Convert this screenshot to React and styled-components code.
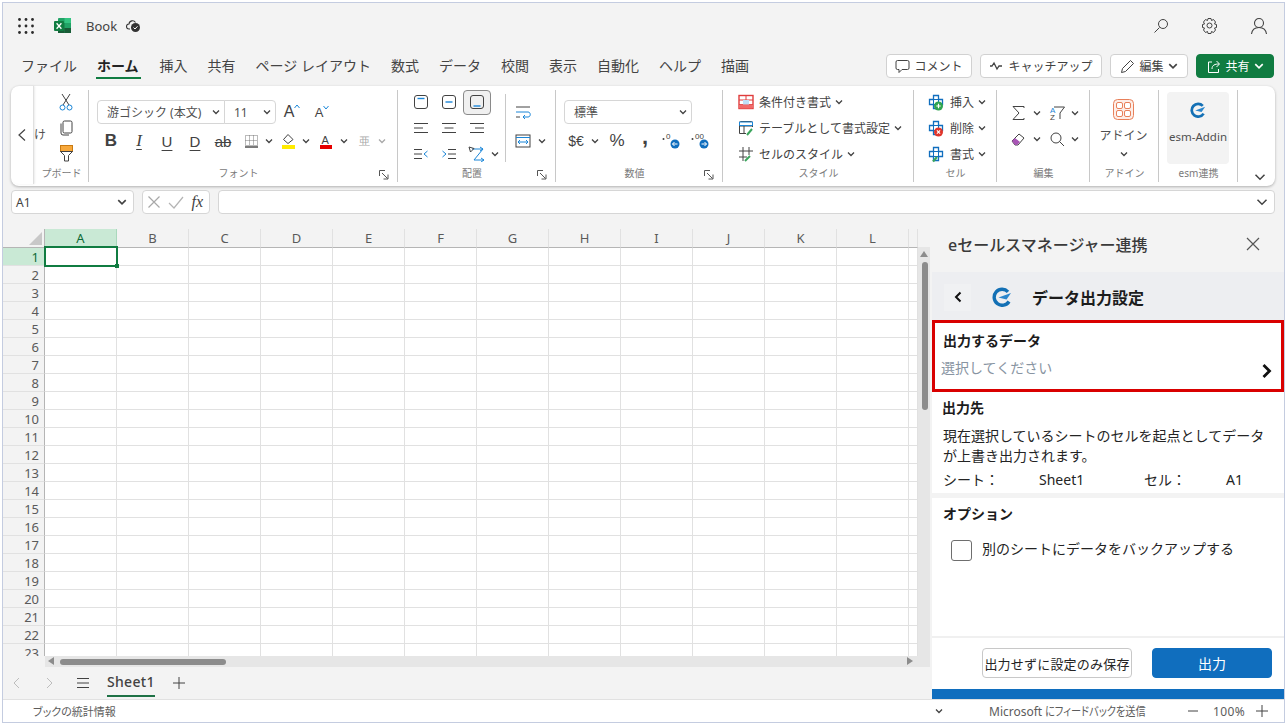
import React from "react";
import styled, { createGlobalStyle } from "styled-components";

const FONT = `"Noto Sans", "Noto Sans CJK JP", sans-serif`;
const GREEN = "#107c41";
const BLUE = "#106ebe";

const GlobalStyle = createGlobalStyle`
  html, body {
    margin: 0;
    background: #fff;
    font-family: ${FONT};
    overflow: hidden;
  }
  * { box-sizing: border-box; }
`;

const Win = styled.div`
  position: relative;
  margin: 2px 0 0 2px;
  width: 1283px;
  height: 721px;
  border: 1px solid #c4cce0;
  background: #f3f3f3;
  display: flex;
  flex-direction: column;
  overflow: hidden;
`;

/* title bar */
const TitleBar = styled.div`
  height: 45px;
  display: flex;
  align-items: center;
  padding: 0 16px 0 15px;
  flex-shrink: 0;
`;
const BookName = styled.span`
  margin-left: 15px;
  font-size: 13px;
  color: #424242;
  width: 40px;
`;
const TitleTools = styled.div`
  margin-left: auto;
  display: flex;
  align-items: center;
  gap: 32px;
`;

/* tab row */
const TabRow = styled.div`
  height: 38px;
  display: flex;
  padding: 6px 10px 0 18px;
  flex-shrink: 0;
`;
const Tabs = styled.div`
  display: flex;
  gap: 20px;
  flex: 1;
`;
const Tab = styled.div`
  height: 25px;
  font-size: 14px;
  line-height: 24px;
  white-space: nowrap;
  color: ${(p) => (p.$active ? "#242424" : "#444")};
  font-weight: ${(p) => (p.$active ? 700 : 400)};
  margin-right: ${(p) => (p.$active ? 1 : 0)}px;
  position: relative;
  ${(p) =>
    p.$active &&
    `&:after { content: ""; position: absolute; left: -1px; right: -2px; bottom: 0; height: 2px; background: ${GREEN}; }`}
`;
const ActionRow = styled.div`
  display: flex;
  gap: 8px;
  height: 24px;
`;
const ActionBtn = styled.div`
  width: ${(p) => p.$w}px;
  height: 24px;
  display: flex;
  align-items: center;
  justify-content: center;
  gap: 4px;
  border: 1px solid ${(p) => (p.$primary ? GREEN : "#d1d1d1")};
  border-radius: 4px;
  background: ${(p) => (p.$primary ? GREEN : "#fff")};
  color: ${(p) => (p.$primary ? "#fff" : "#424242")};
  font-size: 12px;
  white-space: nowrap;
`;

/* ribbon */
const Ribbon = styled.div`
  position: relative;
  height: 100px;
  margin: 0 9px 0 8px;
  background: #fff;
  border-radius: 8px;
  box-shadow: 0 1px 3px rgba(0, 0, 0, 0.28);
  display: flex;
  flex-shrink: 0;
`;
const BackTab = styled.div`
  width: 23px;
  height: 98px;
  display: flex;
  align-items: center;
  justify-content: center;
  border-right: 1px solid #e0e0e0;
  border-radius: 8px 0 0 8px;
  box-shadow: 1px 0 2px rgba(0, 0, 0, 0.08);
`;
const Group = styled.div`
  position: relative;
  width: ${(p) => p.$w}px;
  height: 100px;
  flex-shrink: 0;
  &:after {
    content: "";
    position: absolute;
    right: 0;
    top: 4px;
    bottom: 4px;
    width: 1px;
    background: #c8c8c8;
  }
`;
const GroupLabel = styled.div`
  position: absolute;
  left: 0;
  right: ${(p) => (p.$launch ? 10 : 0)}px;
  top: 80px;
  font-size: 10px;
  line-height: 14px;
  text-align: center;
  color: #7a7a7a;
  white-space: nowrap;
`;
const Launcher = styled.svg`
  position: absolute;
  right: 9px;
  bottom: 6px;
`;
const ClipText = styled.div`
  position: absolute;
  left: 0;
  top: 39px;
  font-size: 12px;
  color: #505050;
  white-space: nowrap;
`;
const ClipIcons = styled.div`
  position: absolute;
  left: 25px;
  top: 7px;
  width: 14px;
  display: flex;
  flex-direction: column;
  align-items: center;
  gap: 9px;
`;
const FontStack = styled.div`
  padding: 14px 0 0 8px;
  display: flex;
  flex-direction: column;
  gap: 5px;
`;
const Line = styled.div`
  display: flex;
  align-items: center;
  gap: ${(p) => p.$gap || 0}px;
  height: ${(p) => p.$h || 24}px;
`;
const Drop = styled.div`
  display: flex;
  align-items: center;
  justify-content: space-between;
  width: ${(p) => p.$w}px;
  height: 24px;
  border: 1px solid #d6d6d6;
  background: #fff;
  padding: 0 4px 0 ${(p) => p.$pad || 9}px;
  font-size: 12px;
  color: #505050;
  white-space: nowrap;
  border-radius: ${(p) => p.$r || "4px"};
  ${(p) => p.$noLeft && "margin-left: -1px;"}
`;
const ToolGlyph = styled.span`
  width: ${(p) => p.$w || 28}px;
  margin-left: ${(p) => p.$ml || 0}px;
  padding-bottom: ${(p) => p.$pb || 0}px;
  height: 24px;
  flex-shrink: 0;
  display: inline-flex;
  align-items: center;
  justify-content: center;
  font-size: ${(p) => p.$size || 15}px;
  font-family: ${(p) => (p.$serif ? `"Liberation Serif", serif` : `"Liberation Sans", sans-serif`)};
  color: ${(p) => p.$color || "#424242"};
  font-weight: ${(p) => (p.$bold ? 700 : 400)};
  font-style: ${(p) => (p.$italic ? "italic" : "normal")};
  text-decoration: ${(p) => p.$deco || "none"};
  text-underline-offset: 3px;
`;
const AlignGrid = styled.div`
  position: absolute;
  left: 9px;
  top: 3px;
  display: grid;
  grid-template-columns: repeat(3, 28px);
  grid-auto-rows: 26px;
  justify-items: center;
  align-items: center;
`;
const AlignBtn = styled.div`
  width: ${(p) => (p.$wide ? 44 : 28)}px;
  height: 25px;
  display: flex;
  align-items: center;
  justify-content: ${(p) => (p.$wide ? "flex-start" : "center")};
  border-radius: 4px;
  ${(p) => p.$wide && "justify-self: start; gap: 5px; padding-left: 5px;"}
  ${(p) => p.$on && "background: #f0f0f0; border: 1px solid #8a8a8a;"}
`;
const InnerSep = styled.div`
  position: absolute;
  left: 107px;
  top: 8px;
  height: 68px;
  width: 1px;
  background: #c8c8c8;
`;
const WrapCol = styled.div`
  position: absolute;
  left: 117px;
  top: 18px;
  display: flex;
  flex-direction: column;
  gap: 13px;
`;
const ListCol = styled.div`
  position: absolute;
  left: ${(p) => p.$left}px;
  top: 3px;
  display: flex;
  flex-direction: column;
`;
const ListRow = styled.div`
  height: 26px;
  display: flex;
  align-items: center;
  gap: 4px;
  font-size: 12px;
  color: #424242;
  white-space: nowrap;
`;
const RowIcon = styled.span`
  display: inline-flex;
  margin-right: 1px;
`;
const EditGrid = styled.div`
  position: absolute;
  left: 14px;
  top: 14px;
  display: grid;
  grid-template-columns: 38px 38px;
  grid-auto-rows: 26px;
`;
const EditItem = styled.div`
  display: flex;
  align-items: center;
  gap: 6px;
`;
const TallBtn = styled.div`
  position: absolute;
  left: ${(p) => p.$left}px;
  right: ${(p) => p.$right}px;
  top: ${(p) => p.$top}px;
  height: ${(p) => p.$h}px;
  display: flex;
  flex-direction: column;
  align-items: center;
  background: ${(p) => p.$bg || "transparent"};
  border-radius: 4px;
  font-size: 12px;
  color: #505050;
  white-space: nowrap;
`;
const AddinText = styled.span`
  margin: 7px 0 6px;
  line-height: 17px;
`;
const EsmMark = styled.span`
  margin-top: 10px;
  height: 20px;
`;
const EsmText = styled.span`
  margin-top: 7px;
  font-size: 11.5px;
`;
const Collapse = styled.div`
  position: absolute;
  right: 9px;
  top: 80px;
`;

/* formula bar */
const FormulaBar = styled.div`
  height: 24px;
  margin: 4px 9px 4px 8px;
  display: flex;
  gap: 8px;
  flex-shrink: 0;
`;
const FormulaBox = styled.div`
  width: ${(p) => (p.$w ? `${p.$w}px` : "auto")};
  flex: ${(p) => (p.$w ? "none" : 1)};
  height: 24px;
  background: #fff;
  border: 1px solid #d6d6d6;
  border-radius: 4px;
  display: flex;
  align-items: center;
  justify-content: space-between;
  padding: 0 6px 0 4px;
  font-size: 12px;
  color: #424242;
`;
const FxText = styled.span`
  font-family: "Liberation Serif", serif;
  font-style: italic;
  font-size: 16px;
  color: #424242;
`;

/* workspace */
const Workspace = styled.div`
  flex: 1;
  min-height: 0;
  display: flex;
`;
const SheetArea = styled.div`
  position: relative;
  width: 929px;
  flex-shrink: 0;
  background: #f3f3f3;
`;
const GridWrap = styled.div`
  position: absolute;
  left: 0;
  top: 11px;
  width: 915px;
  height: 427px;
  overflow: hidden;
  display: grid;
  grid-template-columns: 42px repeat(12, 72px) 9px;
  grid-template-rows: 19px;
  grid-auto-rows: 18px;
  background: #fff;
`;
const Corner = styled.div`
  background: #f3f3f3;
  border-right: 1px solid #b5b5b5;
  border-bottom: 1px solid #b5b5b5;
  position: relative;
  &:after {
    content: "";
    position: absolute;
    right: 2px;
    bottom: 2px;
    border-style: solid;
    border-width: 0 0 13px 13px;
    border-color: transparent transparent #c8c8c8 transparent;
  }
`;
const ColHead = styled.div`
  background: ${(p) => (p.$on ? "#c9e9d5" : "#f3f3f3")};
  border-right: 1px solid ${(p) => (p.$on ? "#a9d8bc" : "#e1e1e1")};
  border-bottom: 1px solid ${(p) => (p.$on ? GREEN : "#b5b5b5")};
  text-align: center;
  font-size: 13px;
  line-height: 18px;
  color: ${(p) => (p.$on ? "#0e6b38" : "#5a5a5a")};
`;
const RowHead = styled.div`
  background: ${(p) => (p.$on ? "#c9e9d5" : "#f3f3f3")};
  border-right: 1px solid ${(p) => (p.$on ? GREEN : "#b5b5b5")};
  border-bottom: 1px solid #e1e1e1;
  text-align: right;
  padding-right: 5px;
  font-size: 13px;
  line-height: 19px;
  color: ${(p) => (p.$on ? "#0e6b38" : "#5a5a5a")};
`;
const Cell = styled.div`
  border-right: 1px solid #e1e1e1;
  border-bottom: 1px solid #e1e1e1;
`;
const Selection = styled.div`
  position: absolute;
  left: 41px;
  top: 17px;
  width: 74px;
  height: 21px;
  border: 2px solid ${GREEN};
  &:after {
    content: "";
    position: absolute;
    right: -3px;
    bottom: -3px;
    width: 4px;
    height: 4px;
    background: ${GREEN};
  }
`;
const VScroll = styled.div`
  position: absolute;
  left: 915px;
  top: 29px;
  width: 12px;
  height: 420px;
  background: #e6e6e6;
`;
const HScroll = styled.div`
  position: absolute;
  left: 42px;
  top: 438px;
  width: 885px;
  height: 11px;
  background: #e6e6e6;
`;
const VThumb = styled.div`
  position: absolute;
  left: 4px;
  top: 15px;
  width: 6px;
  height: 148px;
  border-radius: 3px;
  background: #8c8c8c;
`;
const HThumb = styled.div`
  position: absolute;
  left: 15px;
  top: 3px;
  width: 166px;
  height: 6px;
  border-radius: 3px;
  background: #8c8c8c;
`;
const Arrow = styled.div`
  position: absolute;
  width: 0;
  height: 0;
  border-style: solid;
  ${(p) => p.$css}
`;
const SheetTabs = styled.div`
  position: absolute;
  left: 0;
  top: 449px;
  width: 929px;
  height: 32px;
  display: flex;
  align-items: center;
  padding-left: 9px;
`;
const SheetNav = styled.span`
  width: ${(p) => p.$w}px;
  display: inline-flex;
  justify-content: flex-start;
`;
const SheetTab = styled.div`
  position: relative;
  width: 48px;
  height: 32px;
  margin-right: 18px;
  font-size: 14px;
  font-weight: 500;
  letter-spacing: 0.3px;
  line-height: 29px;
  color: #424242;
  white-space: nowrap;
  &:after {
    content: "";
    position: absolute;
    left: 0;
    right: 0;
    bottom: 2px;
    height: 2.5px;
    background: #1e7145;
  }
`;

/* task pane */
const Pane = styled.div`
  flex: 1;
  position: relative;
  background: #fff;
  display: flex;
  flex-direction: column;
`;
const PaneHead = styled.div`
  height: 54px;
  background: #f3f3f3;
  display: flex;
  align-items: center;
  justify-content: space-between;
  padding: 0 24px 2px 16px;
  font-size: 16px;
  font-weight: 500;
  color: #3a3a3a;
  white-space: nowrap;
`;
const SubHead = styled.div`
  height: 48px;
  background: #edeef1;
  display: flex;
  align-items: center;
  padding: 2px 0 0 12px;
  font-size: 16px;
  font-weight: 700;
  color: #1c1c1c;
`;
const BackBtn = styled.div`
  width: 27px;
  height: 27px;
  background: #f0f1f3;
  display: flex;
  align-items: center;
  justify-content: center;
  margin-right: 21px;
`;
const SubTitle = styled.span`
  margin-left: 20px;
`;
const Picker = styled.div`
  position: relative;
  height: 72px;
  border: 3px solid #d90000;
  padding: 8px 8px 0 8px;
`;
const FieldTitle = styled.div`
  font-size: 14px;
  font-weight: 700;
  line-height: 20px;
  color: #1c1c1c;
`;
const Placeholder = styled.div`
  margin: 7px 0 0 -2px;
  font-size: 14px;
  line-height: 20px;
  color: #8894a2;
`;
const PickerArrow = styled.svg`
  position: absolute;
  right: 8px;
  top: 40px;
`;
const Section = styled.div`
  padding: ${(p) => p.$pad};
  height: ${(p) => p.$h}px;
  ${(p) => p.$rule && "border-bottom: 5px solid #f3f3f3;"}
`;
const Body = styled.div`
  margin: 8px 0 0 1px;
  font-size: 14px;
  line-height: 20px;
  color: #242424;
`;
const InfoRow = styled.div`
  display: grid;
  grid-template-columns: 96px 105px 82px auto;
  margin: 4px 0 0 1px;
  font-size: 14px;
  line-height: 20px;
  color: #242424;
`;
const CheckRow = styled.div`
  display: flex;
  align-items: center;
  gap: 10px;
  margin: 16px 0 0 8px;
  font-size: 14px;
  color: #242424;
`;
const CheckLabel = styled.span`
  position: relative;
  top: -3px;
`;
const CheckBox = styled.div`
  width: 21px;
  height: 21px;
  border: 1px solid #6e6e6e;
  border-radius: 3px;
  background: #fff;
`;
const Footer = styled.div`
  position: absolute;
  left: 0;
  right: 0;
  bottom: 0;
  height: 63px;
  border-top: 2px solid #f0f0f0;
  border-bottom: 10px solid ${BLUE};
  padding: 10px 12px 0 50px;
  display: flex;
  gap: 20px;
`;
const FootBtn = styled.div`
  width: ${(p) => p.$w}px;
  height: 30px;
  display: flex;
  align-items: center;
  justify-content: center;
  border-radius: 4px;
  font-size: 14px;
  white-space: nowrap;
  background: ${(p) => (p.$primary ? BLUE : "#fff")};
  color: ${(p) => (p.$primary ? "#fff" : "#242424")};
  border: 1px solid ${(p) => (p.$primary ? BLUE : "#c8c8c8")};
  ${(p) => !p.$primary && "font-size: 13px; letter-spacing: 0.2px;"}
`;

/* status bar */
const StatusBar = styled.div`
  position: relative;
  height: 23px;
  background: #fff;
  border-top: 1px solid #e1e1e1;
  display: flex;
  align-items: center;
  font-size: 11px;
  font-feature-settings: "palt";
  color: #5c5c5c;
  flex-shrink: 0;
  padding-left: 30px;
  white-space: nowrap;
`;
const StatusRight = styled.div`
  position: absolute;
  left: 932px;
  right: 0;
  display: flex;
  align-items: center;
  font-size: 12px;
`;
const FeedbackText = styled.span`
  width: 198px;
  margin-left: 46px;
`;
const NarrowKana = styled.span`
  display: inline-block;
  transform: scaleX(0.85);
  transform-origin: left center;
`;
const ZoomText = styled.span`
  margin: 0 11px 0 14px;
  font-size: 12px;
  letter-spacing: 0.4px;
`;

/* drawings */
const Chev = ({ size = 8, color = "#424242", w = 1.3 }) => (
  <svg width={size} height={size} viewBox="0 0 8 8" style={{ flexShrink: 0 }}>
    <path d="M1 2.5 4 5.5 7 2.5" fill="none" stroke={color} strokeWidth={w} />
  </svg>
);
const Stroke = ({ w = 16, h = 16, children, sw = 1, color = "#424242" }) => (
  <svg width={w} height={h} viewBox={`0 0 ${w} ${h}`} fill="none" stroke={color} strokeWidth={sw} style={{ flexShrink: 0 }}>
    {children}
  </svg>
);
const Waffle = () => (
  <svg width="16" height="16" viewBox="0 0 16 16" fill="#2b2b2b">
    {[1.5, 8, 14.5].map((y) =>
      [1.5, 8, 14.5].map((x) => <circle key={`${x}-${y}`} cx={x} cy={y} r="1.4" />)
    )}
  </svg>
);
const ExcelLogo = () => (
  <svg width="17" height="17" viewBox="0 0 17 17" style={{ marginLeft: 20 }}>
    <rect x="4" y="1" width="13" height="15" rx="1" fill="#21a366" />
    <rect x="10.5" y="1" width="6.5" height="5" fill="#33c481" />
    <rect x="4" y="6" width="6.5" height="5" fill="#107c41" />
    <rect x="10.5" y="11" width="6.5" height="5" fill="#185c37" />
    <rect x="4" y="11" width="6.5" height="5" fill="#185c37" />
    <rect x="0" y="4" width="10" height="10" rx="1" fill="#107c41" />
    <path d="M2.6 6.3 7.4 11.7M7.4 6.3 2.6 11.7" stroke="#fff" strokeWidth="1.3" />
  </svg>
);
const CloudCheck = () => (
  <svg width="16" height="14" viewBox="0 0 16 14">
    <path d="M4 10H3a2.500 2.500 0 0 1 0-5 3.500 3.500 0 0 1 6.500-1.500" fill="none" stroke="#333" strokeWidth="1.1" />
    <circle cx="9.500" cy="8.500" r="4.500" fill="#333" />
    <path d="M7.500 8.500 9 10 11.500 7.300" fill="none" stroke="#fff" strokeWidth="1" />
  </svg>
);
const EsmLogo = ({ size = 20 }) => (
  <svg width={size} height={size} viewBox="0 0 20 20">
    <path d="M17 14.500A8 8 0 1 1 16 4.800" fill="none" stroke="#1370b5" strokeWidth="3.400" />
    <path d="M6.500 10.500 19 6 14.500 12.500Z" fill="#2a86cc" />
  </svg>
);
const CellIcon = ({ badge, badgeColor }) => (
  <svg width="18" height="17" viewBox="0 0 18 17">
    <path d="M6.500 1.500h5v4h4v5h-4v4h-5v-4h-4v-5h4z" fill="#fff" stroke="#106ebe" strokeWidth="1.300" />
    <path d="M6.500 5.500h5v5h-5z" fill="none" stroke="#106ebe" strokeWidth="1" />
    {badge === "pen" ? (
      <path d="M6 15.500 10 11" stroke={badgeColor} strokeWidth="2.200" />
    ) : (
      <>
        <circle cx="11.500" cy="12" r="4.500" fill={badgeColor} />
        <path
          d={badge === "plus" ? "M9.300 12h4.400M11.500 9.800v4.400" : "M9.900 10.400l3.200 3.200M13.100 10.400l-3.200 3.200"}
          stroke="#fff"
          strokeWidth="1.200"
        />
      </>
    )}
  </svg>
);
const VAlignIcon = ({ y }) => (
  <svg width="16" height="16" viewBox="0 0 16 16">
    <rect x="1.500" y="1.500" width="13" height="13" rx="2.500" fill="none" stroke="#424242" />
    <path d={`M4.500 ${y}h7`} stroke="#1a86d8" strokeWidth="1.400" />
  </svg>
);
const LinesIcon = ({ rows }) => (
  <Stroke>
    {rows.map(([a, b], i) => (
      <path key={i} d={`M${a} ${3.5 + i * 4.5}H${b}`} />
    ))}
  </Stroke>
);
const IndentIcon = ({ flip }) => (
  <Stroke>
    <path d={flip ? "M7 3.500h8M7 8h8M7 12.500h8" : "M1 3.500h8M1 8h8M1 12.500h8"} />
    <path d={flip ? "M1.500 5 5 8 1.500 11" : "M14.500 5 11 8 14.500 11"} stroke="#1a86d8" />
  </Stroke>
);
const DecimalIcon = ({ right, text }) => (
  <svg width="20" height="18" viewBox="0 0 20 18">
    <circle cx="1.500" cy="7" r="1" fill="#424242" />
    <text x="4" y="7" fontSize="8" fill="#424242" fontFamily="Liberation Sans">{text}</text>
    <circle cx="13" cy="12" r="4.500" fill="#106ebe" />
    <path d={right ? "M10.500 12h5M13.500 10l2 2-2 2" : "M15.500 12h-5M12.500 10l-2 2 2 2"} fill="none" stroke="#fff" />
  </svg>
);
const LaunchIcon = () => (
  <Launcher width="10" height="10" viewBox="0 0 10 10" fill="none" stroke="#555">
    <path d="M.5 6V.5H6M3 3l5.500 5.500M9 4.500V9H4.500" />
  </Launcher>
);

const COLS = "ABCDEFGHIJKL".split("");
const ROWS = Array.from({ length: 23 }, (_, i) => i + 1);

const TABS = ["ファイル", "ホーム", "挿入", "共有", "ページ レイアウト", "数式", "データ", "校閲", "表示", "自動化", "ヘルプ", "描画"];

const SheetGrid = () => (
  <GridWrap>
    <Corner />
    {COLS.map((c, i) => (
      <ColHead key={c} $on={i === 0}>{c}</ColHead>
    ))}
    <ColHead />
    {ROWS.map((r) => (
      <React.Fragment key={r}>
        <RowHead $on={r === 1}>{r}</RowHead>
        {COLS.map((c) => (
          <Cell key={c} />
        ))}
        <Cell />
      </React.Fragment>
    ))}
    <Selection />
  </GridWrap>
);

const FontGroup = () => (
  <Group $w={309}>
    <FontStack>
      <Line>
        <Drop $w={128} $r="4px 0 0 4px">
          游ゴシック (本文)<Chev />
        </Drop>
        <Drop $w={52} $r="0 4px 4px 0" $noLeft>
          11<Chev />
        </Drop>
        <ToolGlyph $w={32} $size={16}>A<svg width="6" height="6" viewBox="0 0 6 6" style={{ marginBottom: 10 }}><path d="M.5 4 3 1 5.500 4" fill="none" stroke="#1a86d8" /></svg></ToolGlyph>
        <ToolGlyph $w={28} $size={13}>A<svg width="6" height="6" viewBox="0 0 6 6" style={{ marginBottom: 10 }}><path d="M.5 2 3 5 5.500 2" fill="none" stroke="#1a86d8" /></svg></ToolGlyph>
      </Line>
      <Line>
        <ToolGlyph $bold $size={17}>B</ToolGlyph>
        <ToolGlyph $italic $serif $deco="underline" $size={17}>I</ToolGlyph>
        <ToolGlyph $deco="underline">U</ToolGlyph>
        <ToolGlyph $deco="underline">D</ToolGlyph>
        <ToolGlyph $deco="line-through">ab</ToolGlyph>
        <ToolGlyph>
          <Stroke w={15} h={15} color="#777">
            <path d="M1.500 1.500h12v10h-12zM5.500 1.500v10M9.500 1.500v10M1.500 6.500h12" strokeDasharray="1 1" />
            <path d="M1 13h13" stroke="#424242" strokeWidth="1.400" />
          </Stroke>
        </ToolGlyph>
        <ToolGlyph $w={8}><Chev /></ToolGlyph>
        <ToolGlyph $ml={6} $w={18}>
          <svg width="15" height="17" viewBox="0 0 15 17">
            <path d="M7 1.500 12 6.500 7 10.500 2.500 6.500z" fill="none" stroke="#424242" />
            <rect x="1" y="12" width="13" height="4" fill="#ffeb00" />
          </svg>
        </ToolGlyph>
        <ToolGlyph $ml={5} $w={8}><Chev /></ToolGlyph>
        <ToolGlyph $ml={6} $w={20}>
          <svg width="14" height="17" viewBox="0 0 14 17">
            <text x="2.500" y="10.500" fontSize="11" fill="#424242" fontFamily="Liberation Sans">A</text>
            <rect x="1" y="12" width="12" height="4" fill="#e60000" />
          </svg>
        </ToolGlyph>
        <ToolGlyph $ml={4} $w={8}><Chev /></ToolGlyph>
        <ToolGlyph $ml={6} $w={20} $size={11} $color="#a8a8a8">亜</ToolGlyph>
        <ToolGlyph $ml={4} $w={8}><Chev color="#a8a8a8" /></ToolGlyph>
      </Line>
    </FontStack>
    <GroupLabel $launch>フォント</GroupLabel>
    <LaunchIcon />
  </Group>
);

const AlignGroup = () => (
  <Group $w={158}>
    <AlignGrid>
      <AlignBtn><VAlignIcon y={4.500} /></AlignBtn>
      <AlignBtn><VAlignIcon y={8} /></AlignBtn>
      <AlignBtn $on><VAlignIcon y={12} /></AlignBtn>
      <AlignBtn><LinesIcon rows={[[1, 15], [1, 10], [1, 15]]} /></AlignBtn>
      <AlignBtn><LinesIcon rows={[[1, 15], [3.500, 12.500], [1, 15]]} /></AlignBtn>
      <AlignBtn><LinesIcon rows={[[1, 15], [6, 15], [1, 15]]} /></AlignBtn>
      <AlignBtn><IndentIcon /></AlignBtn>
      <AlignBtn><IndentIcon flip /></AlignBtn>
      <AlignBtn $wide>
        <Stroke w={18} h={16} color="#1a86d8">
          <path d="M4 3 15 3M15 3 6 14M6 14h10M12 1l3 2-3 2M13 12l3 2-3 2" />
          <path d="M1 1l5 1.500-3.500 3.500z" stroke="#424242" />
        </Stroke>
        <Chev />
      </AlignBtn>
    </AlignGrid>
    <InnerSep />
    <WrapCol>
      <Stroke h={16}>
        <path d="M1 3h14M1 13h4" />
        <path d="M1 8h12c3 0 3 5 0 5H8M10 11l-2 2 2 2" stroke="#1a86d8" />
      </Stroke>
      <Line $h={16} $gap={7}>
        <svg width="16" height="14" viewBox="0 0 16 14">
          <rect x="1" y="1" width="14" height="12" fill="none" stroke="#424242" />
          <path d="M1 3.500h14" stroke="#1a86d8" />
          <path d="M3 8h10M5 6 3 8l2 2M11 6l2 2-2 2" fill="none" stroke="#1a86d8" />
        </svg>
        <Chev />
      </Line>
    </WrapCol>
    <GroupLabel $launch>配置</GroupLabel>
    <LaunchIcon />
  </Group>
);

const NumberGroup = () => (
  <Group $w={167}>
    <FontStack>
      <Line>
        <Drop $w={128}>標準<Chev /></Drop>
      </Line>
      <Line>
        <ToolGlyph $w={24} $size={14}>$€</ToolGlyph>
        <ToolGlyph $w={14}><Chev /></ToolGlyph>
        <ToolGlyph $w={30} $size={17}>%</ToolGlyph>
        <ToolGlyph $w={26} $size={22} $bold $pb={8}>,</ToolGlyph>
        <ToolGlyph $w={28}><DecimalIcon text="0" /></ToolGlyph>
        <ToolGlyph $w={30}><DecimalIcon right text="00" /></ToolGlyph>
      </Line>
    </FontStack>
    <GroupLabel $launch>数値</GroupLabel>
    <LaunchIcon />
  </Group>
);

const StyleGroup = () => (
  <Group $w={191}>
    <ListCol $left={15}>
      <ListRow>
        <RowIcon>
          <svg width="16" height="16" viewBox="0 0 16 16">
            <rect x="1" y="1.500" width="14" height="13" fill="#fff" stroke="#e03c3c" strokeWidth="1.400" />
            <path d="M1 6h14M1 10.500h14M8 1.500v13" stroke="#e03c3c" />
            <rect x="1.500" y="10.500" width="13" height="4" fill="#f06a6a" />
            <rect x="5" y="6" width="6" height="4.500" fill="#bfe0f8" />
          </svg>
        </RowIcon>
        条件付き書式<Chev />
      </ListRow>
      <ListRow>
        <RowIcon>
          <svg width="16" height="16" viewBox="0 0 16 16">
            <path d="M1.500 13.500v-11a1 1 0 0 1 1-1h11a1 1 0 0 1 1 1V7M1.500 13.500H8M1.500 6h13M6 6v7.500" fill="none" stroke="#424242" />
            <path d="M1.500 2h13v3.500h-13z" fill="none" stroke="#1a86d8" />
            <path d="M9 15 14 9" stroke="#3ba55d" strokeWidth="2" />
          </svg>
        </RowIcon>
        テーブルとして書式設定<Chev />
      </ListRow>
      <ListRow>
        <RowIcon>
          <svg width="16" height="16" viewBox="0 0 16 16">
            <path d="M5 1v14M11 1v8M1 5h14M1 11h8" fill="none" stroke="#424242" />
            <path d="M7 15 12 10" stroke="#3ba55d" strokeWidth="2" />
          </svg>
        </RowIcon>
        セルのスタイル<Chev />
      </ListRow>
    </ListCol>
    <GroupLabel>スタイル</GroupLabel>
  </Group>
);

const CellGroup = () => (
  <Group $w={83}>
    <ListCol $left={13}>
      <ListRow><RowIcon><CellIcon badge="plus" badgeColor="#2ea44f" /></RowIcon>挿入<Chev /></ListRow>
      <ListRow><RowIcon><CellIcon badge="x" badgeColor="#e0352b" /></RowIcon>削除<Chev /></ListRow>
      <ListRow><RowIcon><CellIcon badge="pen" badgeColor="#3ba55d" /></RowIcon>書式<Chev /></ListRow>
    </ListCol>
    <GroupLabel>セル</GroupLabel>
  </Group>
);

const EditGroup = () => (
  <Group $w={93}>
    <EditGrid>
      <EditItem>
        <Stroke w={16} h={16}><path d="M13 3V1.500H2L8 8l-6 6.500h11V13" /></Stroke>
        <Chev />
      </EditItem>
      <EditItem>
        <svg width="16" height="16" viewBox="0 0 16 16">
          <text x="1" y="8" fontSize="8" fill="#1a86d8" fontFamily="Liberation Sans">A</text>
          <text x="1" y="15" fontSize="8" fill="#424242" fontFamily="Liberation Sans">Z</text>
          <path d="M5 2h10.500L11 8v6" fill="none" stroke="#424242" />
        </svg>
        <Chev />
      </EditItem>
      <EditItem>
        <svg width="16" height="16" viewBox="0 0 16 16">
          <path d="M1 10 8 3l5 4-6 7H4z" fill="#fff" stroke="#424242" />
          <path d="M1 10l3-3 5 4-3 3H4z" fill="#a855b5" />
        </svg>
        <Chev />
      </EditItem>
      <EditItem>
        <Stroke w={16} h={16}><circle cx="7" cy="7" r="5" /><path d="M10.500 10.500 15 15" /></Stroke>
        <Chev />
      </EditItem>
    </EditGrid>
    <GroupLabel>編集</GroupLabel>
  </Group>
);

const AddinGroup = () => (
  <Group $w={69}>
    <TallBtn $left={0} $right={2} $top={13} $h={70}>
      <svg width="21" height="21" viewBox="0 0 21 21" fill="none" stroke="#e8805a" style={{ flexShrink: 0 }}>
        <rect x=".5" y=".5" width="20" height="20" rx="4" fill="#fdeee8" />
        <rect x="3.500" y="3.500" width="6" height="6" rx="1.500" fill="#fff" />
        <rect x="11.500" y="3.500" width="6" height="6" rx="1.500" fill="#fff" />
        <rect x="3.500" y="11.500" width="6" height="6" rx="1.500" fill="#fff" />
        <rect x="11.500" y="11.500" width="6" height="6" rx="1.500" fill="#fff" />
      </svg>
      <AddinText>アドイン</AddinText>
      <Chev />
    </TallBtn>
    <GroupLabel>アドイン</GroupLabel>
  </Group>
);

const EsmGroup = () => (
  <Group $w={79}>
    <TallBtn $left={8} $right={9} $top={6} $h={72} $bg="#f3f3f3">
      <EsmMark><EsmLogo size={16} /></EsmMark>
      <EsmText>esm-Addin</EsmText>
    </TallBtn>
    <GroupLabel>esm連携</GroupLabel>
  </Group>
);

const App = () => {
  return (
    <>
      <GlobalStyle />
      <Win>
        <TitleBar>
          <Waffle />
          <ExcelLogo />
          <BookName>Book</BookName>
          <CloudCheck />
          <TitleTools>
            <Stroke w={16} h={16}><circle cx="10" cy="6" r="4.500" /><path d="M6.500 9.500 1.500 14.500" /></Stroke>
            <Stroke w={17} h={17}>
              <circle cx="8.500" cy="8.500" r="2.500" />
              <path d="M7 1.500h3l.5 2 2-1 2 2.500-1 2 2 .5v3l-2 .5 1 2-2 2.500-2-1-.5 2H7l-.5-2-2 1-2-2.500 1-2-2-.5v-3l2-.5-1-2 2-2.500 2 1z" />
            </Stroke>
            <Stroke w={18} h={18} sw={1.100}>
              <circle cx="9" cy="6" r="4.500" />
              <path d="M1.500 17c.5-4 3-6.500 7.500-6.500s7 2.500 7.500 6.500" />
            </Stroke>
          </TitleTools>
        </TitleBar>

        <TabRow>
          <Tabs>
            {TABS.map((t) => (
              <Tab key={t} $active={t === "ホーム"}>{t}</Tab>
            ))}
          </Tabs>
          <ActionRow>
            <ActionBtn $w={86}>
              <Stroke w={15} h={15}><path d="M2.500 1.500h10a1.500 1.500 0 0 1 1.500 1.500v6a1.500 1.500 0 0 1-1.500 1.500H7L4 13.500v-3H2.500A1.500 1.500 0 0 1 1 9V3a1.500 1.500 0 0 1 1.500-1.500z" /></Stroke>
              コメント
            </ActionBtn>
            <ActionBtn $w={122}>
              <Stroke w={15} h={12} sw={1.300}><path d="M1 6h2l2-3 3 6 2-3h3" /></Stroke>
              キャッチアップ
            </ActionBtn>
            <ActionBtn $w={78}>
              <Stroke w={15} h={15}><path d="M1.500 13.500l1-4L10.500 1.500l3 3-8 8z" /></Stroke>
              編集<Chev size={10} />
            </ActionBtn>
            <ActionBtn $w={78} $primary>
              <Stroke w={15} h={15} color="#fff"><path d="M6 3H2.500v10.500h10V10M6 10c0-4 3-5 7-5M10.500 2l3 3-3 3" /></Stroke>
              共有<Chev size={10} color="#fff" />
            </ActionBtn>
          </ActionRow>
        </TabRow>

        <Ribbon>
          <BackTab>
            <Stroke w={10} h={14} sw={1.200}><path d="M8 1.500 2 7l6 5.500" /></Stroke>
          </BackTab>
          <Group $w={55}>
            <ClipText>け</ClipText>
            <ClipIcons>
              <Stroke w={14} h={18} color="#424242">
                <path d="M3 1l7 11M11 1 4 12" />
                <circle cx="3.500" cy="14.500" r="2.500" stroke="#1a86d8" />
                <circle cx="10.500" cy="14.500" r="2.500" stroke="#1a86d8" />
              </Stroke>
              <Stroke w={13} h={16}>
                <rect x="3" y="1" width="9" height="12" rx="1.500" />
                <path d="M1 3.500V13a2 2 0 0 0 2 2h6" />
              </Stroke>
              <svg width="13" height="17" viewBox="0 0 13 17">
                <rect x=".5" y=".5" width="12" height="6" fill="#f7a83b" stroke="#c97a12" />
                <path d="M.5 6.500h12L8.500 10.500v5.500h-4v-5.500z" fill="#fff" stroke="#424242" />
              </svg>
            </ClipIcons>
            <GroupLabel>プボード</GroupLabel>
          </Group>
          <FontGroup />
          <AlignGroup />
          <NumberGroup />
          <StyleGroup />
          <CellGroup />
          <EditGroup />
          <AddinGroup />
          <EsmGroup />
          <Collapse><Chev size={12} w={1} /></Collapse>
        </Ribbon>

        <FormulaBar>
          <FormulaBox $w={123}>A1<Chev size={10} /></FormulaBox>
          <FormulaBox $w={68}>
            <Stroke w={14} h={14} color="#a8a8a8" sw={1.200}><path d="M1.500 1.500 12.500 12.500M12.500 1.500 1.500 12.500" /></Stroke>
            <Stroke w={16} h={14} color="#b4b4b4" sw={1.200}><path d="M1 8l5 5L15 2" /></Stroke>
            <FxText>fx</FxText>
          </FormulaBox>
          <FormulaBox><span /><Chev size={12} w={1} /></FormulaBox>
        </FormulaBar>

        <Workspace>
          <SheetArea>
            <SheetGrid />
            <VScroll>
              <Arrow $css="left: 2px; top: 4px; border-width: 0 4.5px 6px; border-color: transparent transparent #8c8c8c;" />
              <VThumb />
              <Arrow $css="left: 2px; bottom: 4px; border-width: 6px 4.5px 0; border-color: #8c8c8c transparent transparent;" />
            </VScroll>
            <HScroll>
              <Arrow $css="left: 3px; top: 1px; border-width: 4.5px 6px 4.5px 0; border-color: transparent #8c8c8c transparent transparent;" />
              <HThumb />
              <Arrow $css="right: 17px; top: 1px; border-width: 4.5px 0 4.5px 6px; border-color: transparent transparent transparent #8c8c8c;" />
            </HScroll>
            <SheetTabs>
              <SheetNav $w={32}><Stroke w={10} h={14} color="#bdbdbd"><path d="M7 2 2 7l5 5" /></Stroke></SheetNav>
              <SheetNav $w={32}><Stroke w={10} h={14} color="#bdbdbd"><path d="M3 2l5 5-5 5" /></Stroke></SheetNav>
              <SheetNav $w={31}><Stroke w={14} h={12}><path d="M1 1.500h12M1 6h12M1 10.500h12" /></Stroke></SheetNav>
              <SheetTab>Sheet1</SheetTab>
              <Stroke w={12} h={12}><path d="M6 0v12M0 6h12" /></Stroke>
            </SheetTabs>
          </SheetArea>

          <Pane>
            <PaneHead>
              eセールスマネージャー連携
              <Stroke w={14} h={14} color="#555" sw={1.200}><path d="M1 1 13 13M13 1 1 13" /></Stroke>
            </PaneHead>
            <SubHead>
              <BackBtn><Stroke w={10} h={12} color="#111" sw={2}><path d="M7.500 1.500 3 6l4.500 4.500" /></Stroke></BackBtn>
              <EsmLogo size={20} />
              <SubTitle>データ出力設定</SubTitle>
            </SubHead>
            <Picker>
              <FieldTitle>出力するデータ</FieldTitle>
              <Placeholder>選択してください</Placeholder>
              <PickerArrow width="12" height="16" viewBox="0 0 12 16" fill="none" stroke="#111" strokeWidth="2.800">
                <path d="M2.500 2l6 6-6 6" />
              </PickerArrow>
            </Picker>
            <Section $pad="6px 10px 0" $h={106} $rule>
              <FieldTitle>出力先</FieldTitle>
              <Body>現在選択しているシートのセルを起点としてデータが上書き出力されます。</Body>
              <InfoRow>
                <span>シート：</span>
                <span>Sheet1</span>
                <span>セル：</span>
                <span>A1</span>
              </InfoRow>
            </Section>
            <Section $pad="6px 11px 0" $h={100}>
              <FieldTitle>オプション</FieldTitle>
              <CheckRow>
                <CheckBox />
                <CheckLabel>別のシートにデータをバックアップする</CheckLabel>
              </CheckRow>
            </Section>
            <Footer>
              <FootBtn $w={150}>出力せずに設定のみ保存</FootBtn>
              <FootBtn $w={120} $primary>出力</FootBtn>
            </Footer>
          </Pane>
        </Workspace>

        <StatusBar>
          ブックの統計情報
          <StatusRight>
            <Chev size={8} />
            <FeedbackText>Microsoft <NarrowKana>にフィードバックを送信</NarrowKana></FeedbackText>
            <Stroke w={12} h={12}><path d="M1 6h10" /></Stroke>
            <ZoomText>100%</ZoomText>
            <Stroke w={12} h={12}><path d="M6 0v12M0 6h12" /></Stroke>
          </StatusRight>
        </StatusBar>
      </Win>
    </>
  );
};

export default App;
